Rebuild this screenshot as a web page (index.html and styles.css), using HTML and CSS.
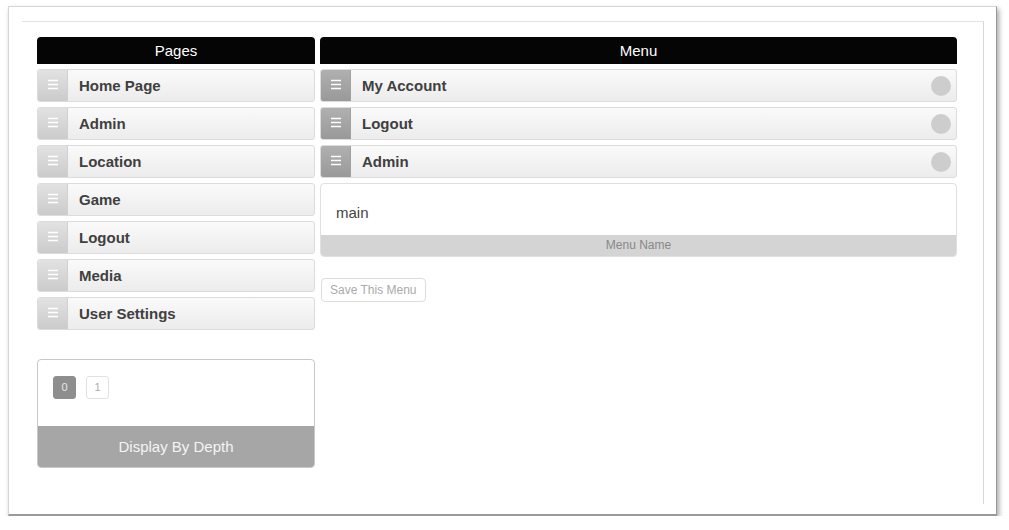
FILE: index.html
```html
<!DOCTYPE html>
<html lang="en">
<head>
    <meta charset="UTF-8">
    <title>Menu Builder</title>
    <link rel="stylesheet" href="styles.css">
</head>
<body>
<div class="window">
<div class="panel">
    <div class="columns">
        <div class="col-pages">
            <div class="col-head">Pages</div>
            <div class="item"><span class="handle"><svg width="10" height="11" viewBox="0 0 10 11"><path d="M0 1.5h10M0 5.5h10M0 9.5h10" stroke="#fff" stroke-width="1.6"/></svg></span><span class="label">Home Page</span></div>
            <div class="item"><span class="handle"><svg width="10" height="11" viewBox="0 0 10 11"><path d="M0 1.5h10M0 5.5h10M0 9.5h10" stroke="#fff" stroke-width="1.6"/></svg></span><span class="label">Admin</span></div>
            <div class="item"><span class="handle"><svg width="10" height="11" viewBox="0 0 10 11"><path d="M0 1.5h10M0 5.5h10M0 9.5h10" stroke="#fff" stroke-width="1.6"/></svg></span><span class="label">Location</span></div>
            <div class="item"><span class="handle"><svg width="10" height="11" viewBox="0 0 10 11"><path d="M0 1.5h10M0 5.5h10M0 9.5h10" stroke="#fff" stroke-width="1.6"/></svg></span><span class="label">Game</span></div>
            <div class="item"><span class="handle"><svg width="10" height="11" viewBox="0 0 10 11"><path d="M0 1.5h10M0 5.5h10M0 9.5h10" stroke="#fff" stroke-width="1.6"/></svg></span><span class="label">Logout</span></div>
            <div class="item"><span class="handle"><svg width="10" height="11" viewBox="0 0 10 11"><path d="M0 1.5h10M0 5.5h10M0 9.5h10" stroke="#fff" stroke-width="1.6"/></svg></span><span class="label">Media</span></div>
            <div class="item"><span class="handle"><svg width="10" height="11" viewBox="0 0 10 11"><path d="M0 1.5h10M0 5.5h10M0 9.5h10" stroke="#fff" stroke-width="1.6"/></svg></span><span class="label">User Settings</span></div>

            <div class="depth">
                <div class="depth-body">
                    <span class="depth-btn active">0</span>
                    <span class="depth-btn">1</span>
                </div>
                <div class="depth-foot">Display By Depth</div>
            </div>
        </div>

        <div class="col-menu">
            <div class="col-head">Menu</div>
            <div class="item menu-item"><span class="handle"><svg width="10" height="11" viewBox="0 0 10 11"><path d="M0 1.5h10M0 5.5h10M0 9.5h10" stroke="#fff" stroke-width="1.6"/></svg></span><span class="label">My Account</span><span class="dot"></span></div>
            <div class="item menu-item"><span class="handle"><svg width="10" height="11" viewBox="0 0 10 11"><path d="M0 1.5h10M0 5.5h10M0 9.5h10" stroke="#fff" stroke-width="1.6"/></svg></span><span class="label">Logout</span><span class="dot"></span></div>
            <div class="item menu-item"><span class="handle"><svg width="10" height="11" viewBox="0 0 10 11"><path d="M0 1.5h10M0 5.5h10M0 9.5h10" stroke="#fff" stroke-width="1.6"/></svg></span><span class="label">Admin</span><span class="dot"></span></div>

            <div class="name-box">
                <div class="name-value">main</div>
                <div class="name-foot">Menu Name</div>
            </div>
            <button class="save-btn">Save This Menu</button>
        </div>
    </div>
</div>
</div>
</body>
</html>
```

FILE: styles.css
```css
body {
    margin: 0;
    background-color: #fff;
    font-family: "Liberation Sans", Arial, sans-serif;
    color: #333;
}
.window {
    margin: 6px 0 0 8px;
    width: 989px;
    height: 510px;
    border-top: 1px solid #d6d6d6;
    border-left: 1px solid #d6d6d6;
    border-right: 1px solid #999;
    border-bottom: 2px solid #9a9a9a;
    box-shadow: 2px 3px 5px rgba(0, 0, 0, 0.35);
    box-sizing: border-box;
}
.panel {
    margin: 14px 0 0 13px;
    width: 962px;
    height: 483px;
    border-top: 1px solid #e2e2e2;
    border-right: 1px solid #d8d8d8;
    box-sizing: border-box;
    padding: 15px 0 0 15px;
}
.columns {
    display: grid;
    grid-template-columns: 278px 637px;
    column-gap: 5px;
    align-items: start;
}
.col-head {
    height: 27px;
    line-height: 27px;
    background-color: #050505;
    color: #fff;
    text-align: center;
    font-size: 15px;
    border-radius: 4px 4px 0 0;
    margin-bottom: 5px;
}
.item {
    display: flex;
    align-items: center;
    height: 33px;
    margin-bottom: 5px;
    border: 1px solid #dcdcdc;
    border-radius: 3px;
    background: linear-gradient(#fafafa, #ececec);
    box-sizing: border-box;
    overflow: hidden;
}
.handle {
    width: 30px;
    height: 100%;
    display: flex;
    align-items: center;
    justify-content: center;
    padding-bottom: 3px;
    background: linear-gradient(#e2e2e2, #cbcbcb);
    border-right: 1px solid #d0d0d0;
    box-sizing: border-box;
}
.label {
    flex: 1;
    padding-left: 11px;
    font-size: 15px;
    font-weight: bold;
    color: #404040;
}
.menu-item .handle {
    background: linear-gradient(#b0b0b0, #999);
    border-right-color: #a0a0a0;
}
.dot {
    width: 20px;
    height: 20px;
    border-radius: 50%;
    background-color: #cdcdcd;
    margin-right: 5px;
}
.depth {
    margin-top: 29px;
    border: 1px solid #c8c8c8;
    border-radius: 4px;
    overflow: hidden;
}
.depth-body {
    height: 66px;
    padding: 16px 0 0 15px;
    box-sizing: border-box;
    display: flex;
    gap: 10px;
    align-items: flex-start;
}
.depth-btn {
    width: 23px;
    height: 23px;
    line-height: 21px;
    text-align: center;
    font-size: 11px;
    color: #aaa;
    border: 1px solid #e2e2e2;
    border-radius: 3px;
    box-sizing: border-box;
}
.depth-btn.active {
    background-color: #8e8e8e;
    border-color: #8e8e8e;
    color: #e8e8e8;
}
.depth-foot {
    height: 41px;
    line-height: 41px;
    background-color: #a6a6a6;
    color: #f4f4f4;
    text-align: center;
    font-size: 15px;
}
.name-box {
    margin-top: 1px;
    border: 1px solid #e0e0e0;
    border-radius: 4px;
    overflow: hidden;
}
.name-value {
    height: 51px;
    line-height: 57px;
    padding-left: 15px;
    font-size: 15px;
    color: #444;
}
.name-foot {
    height: 21px;
    line-height: 21px;
    background-color: #d4d4d4;
    color: #888;
    text-align: center;
    font-size: 12px;
}
.save-btn {
    margin: 21px 0 0 1px;
    height: 24px;
    padding: 0 8px;
    font-family: "Liberation Sans", Arial, sans-serif;
    font-size: 12px;
    color: #aaa;
    background-color: #fff;
    border: 1px solid #ddd;
    border-radius: 4px;
}
```
